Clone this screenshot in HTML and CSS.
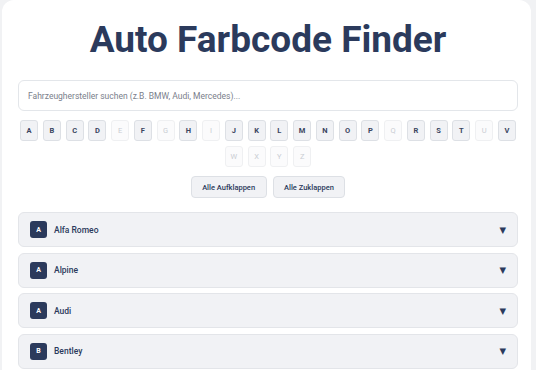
FILE: index.html
```html
<!DOCTYPE html>
<html lang="de">
<head>
<meta charset="utf-8">
<title>Auto Farbcode Finder</title>
<link rel="stylesheet" href="styles.css">
</head>
<body>
<div class="card">
  <h1 class="title">Auto Farbcode Finder</h1>
  <input class="search" type="text" placeholder="Fahrzeughersteller suchen (z.B. BMW, Audi, Mercedes)...">
  <div class="letters">
    <button class="letter">A</button>
    <button class="letter">B</button>
    <button class="letter">C</button>
    <button class="letter">D</button>
    <button class="letter off">E</button>
    <button class="letter">F</button>
    <button class="letter off">G</button>
    <button class="letter">H</button>
    <button class="letter off">I</button>
    <button class="letter">J</button>
    <button class="letter">K</button>
    <button class="letter">L</button>
    <button class="letter">M</button>
    <button class="letter">N</button>
    <button class="letter">O</button>
    <button class="letter">P</button>
    <button class="letter off">Q</button>
    <button class="letter">R</button>
    <button class="letter">S</button>
    <button class="letter">T</button>
    <button class="letter off">U</button>
    <button class="letter">V</button>
    <button class="letter off">W</button>
    <button class="letter off">X</button>
    <button class="letter off">Y</button>
    <button class="letter off">Z</button>
  </div>
  <div class="actions">
    <button class="action">Alle Aufklappen</button>
    <button class="action">Alle Zuklappen</button>
  </div>
  <div class="list">
    <div class="item"><span class="badge">A</span><span class="name">Alfa Romeo</span><span class="arrow">▼</span></div>
    <div class="item"><span class="badge">A</span><span class="name">Alpine</span><span class="arrow">▼</span></div>
    <div class="item"><span class="badge">A</span><span class="name">Audi</span><span class="arrow">▼</span></div>
    <div class="item"><span class="badge">B</span><span class="name">Bentley</span><span class="arrow">▼</span></div>
  </div>
</div>
</body>
</html>
```

FILE: styles.css
```css
* { box-sizing: border-box; }
html, body { margin: 0; padding: 0; }
body {
  background: #f1f2f4;
  font-family: Roboto, "Liberation Sans", sans-serif;
  color: #2b3a5c;
}
.card {
  margin: 0 5px 0 2px;
  background: #ffffff;
  border-radius: 12px 12px 0 0;
  padding: 17px 13px 20px 16px;
}
.title {
  margin: 0;
  text-align: center;
  font-size: 37px;
  line-height: 46px;
  font-weight: 700;
  color: #2b3a5c;
}
.search {
  display: block;
  width: 100%;
  height: 31px;
  margin-top: 17px;
  padding: 0 9px;
  border: 1px solid #e3e6ea;
  border-radius: 6px;
  font-family: Roboto, "Liberation Sans", sans-serif;
  font-size: 8.5px;
  color: #2b3a5c;
  background: #fff;
  outline: none;
}
.search::placeholder { color: #7a808b; }
.letters {
  margin-top: 9px;
  display: flex;
  flex-wrap: wrap;
  justify-content: center;
  column-gap: 4.75px;
  row-gap: 5px;
}
.letter {
  width: 18px;
  height: 21px;
  padding: 0;
  border: 1px solid #dde0e5;
  border-radius: 3px;
  background: #f1f2f5;
  font-family: Roboto, "Liberation Sans", sans-serif;
  font-size: 7.5px;
  font-weight: 700;
  color: #3a4560;
}
.letter.off {
  background: #fbfbfc;
  border-color: #eff0f2;
  color: #c9cdd3;
  font-weight: 400;
}
.actions {
  margin-top: 9px;
  display: flex;
  justify-content: center;
  gap: 6px;
}
.action {
  height: 22px;
  padding: 0 10.5px;
  border: 1px solid #dde0e5;
  border-radius: 4px;
  background: #f1f2f5;
  font-family: Roboto, "Liberation Sans", sans-serif;
  font-size: 7.5px;
  font-weight: 500;
  color: #2b3a5c;
}
.list {
  margin-top: 14px;
  display: flex;
  flex-direction: column;
  gap: 5.5px;
}
.item {
  height: 35px;
  display: flex;
  align-items: center;
  padding: 0 11px 0 11px;
  background: #f1f2f5;
  border: 1px solid #e3e5e9;
  border-radius: 6px;
}
.badge {
  width: 17px;
  height: 17px;
  border-radius: 3px;
  background: #2b3a5c;
  color: #fff;
  font-size: 7px;
  font-weight: 700;
  display: flex;
  align-items: center;
  justify-content: center;
}
.name {
  margin-left: 7px;
  flex: 1;
  font-size: 8.5px;
  font-weight: 500;
  color: #2b3a5c;
}
.arrow {
  font-size: 8.5px;
  color: #2b3a5c;
  font-family: "DejaVu Sans", sans-serif;
}
```
